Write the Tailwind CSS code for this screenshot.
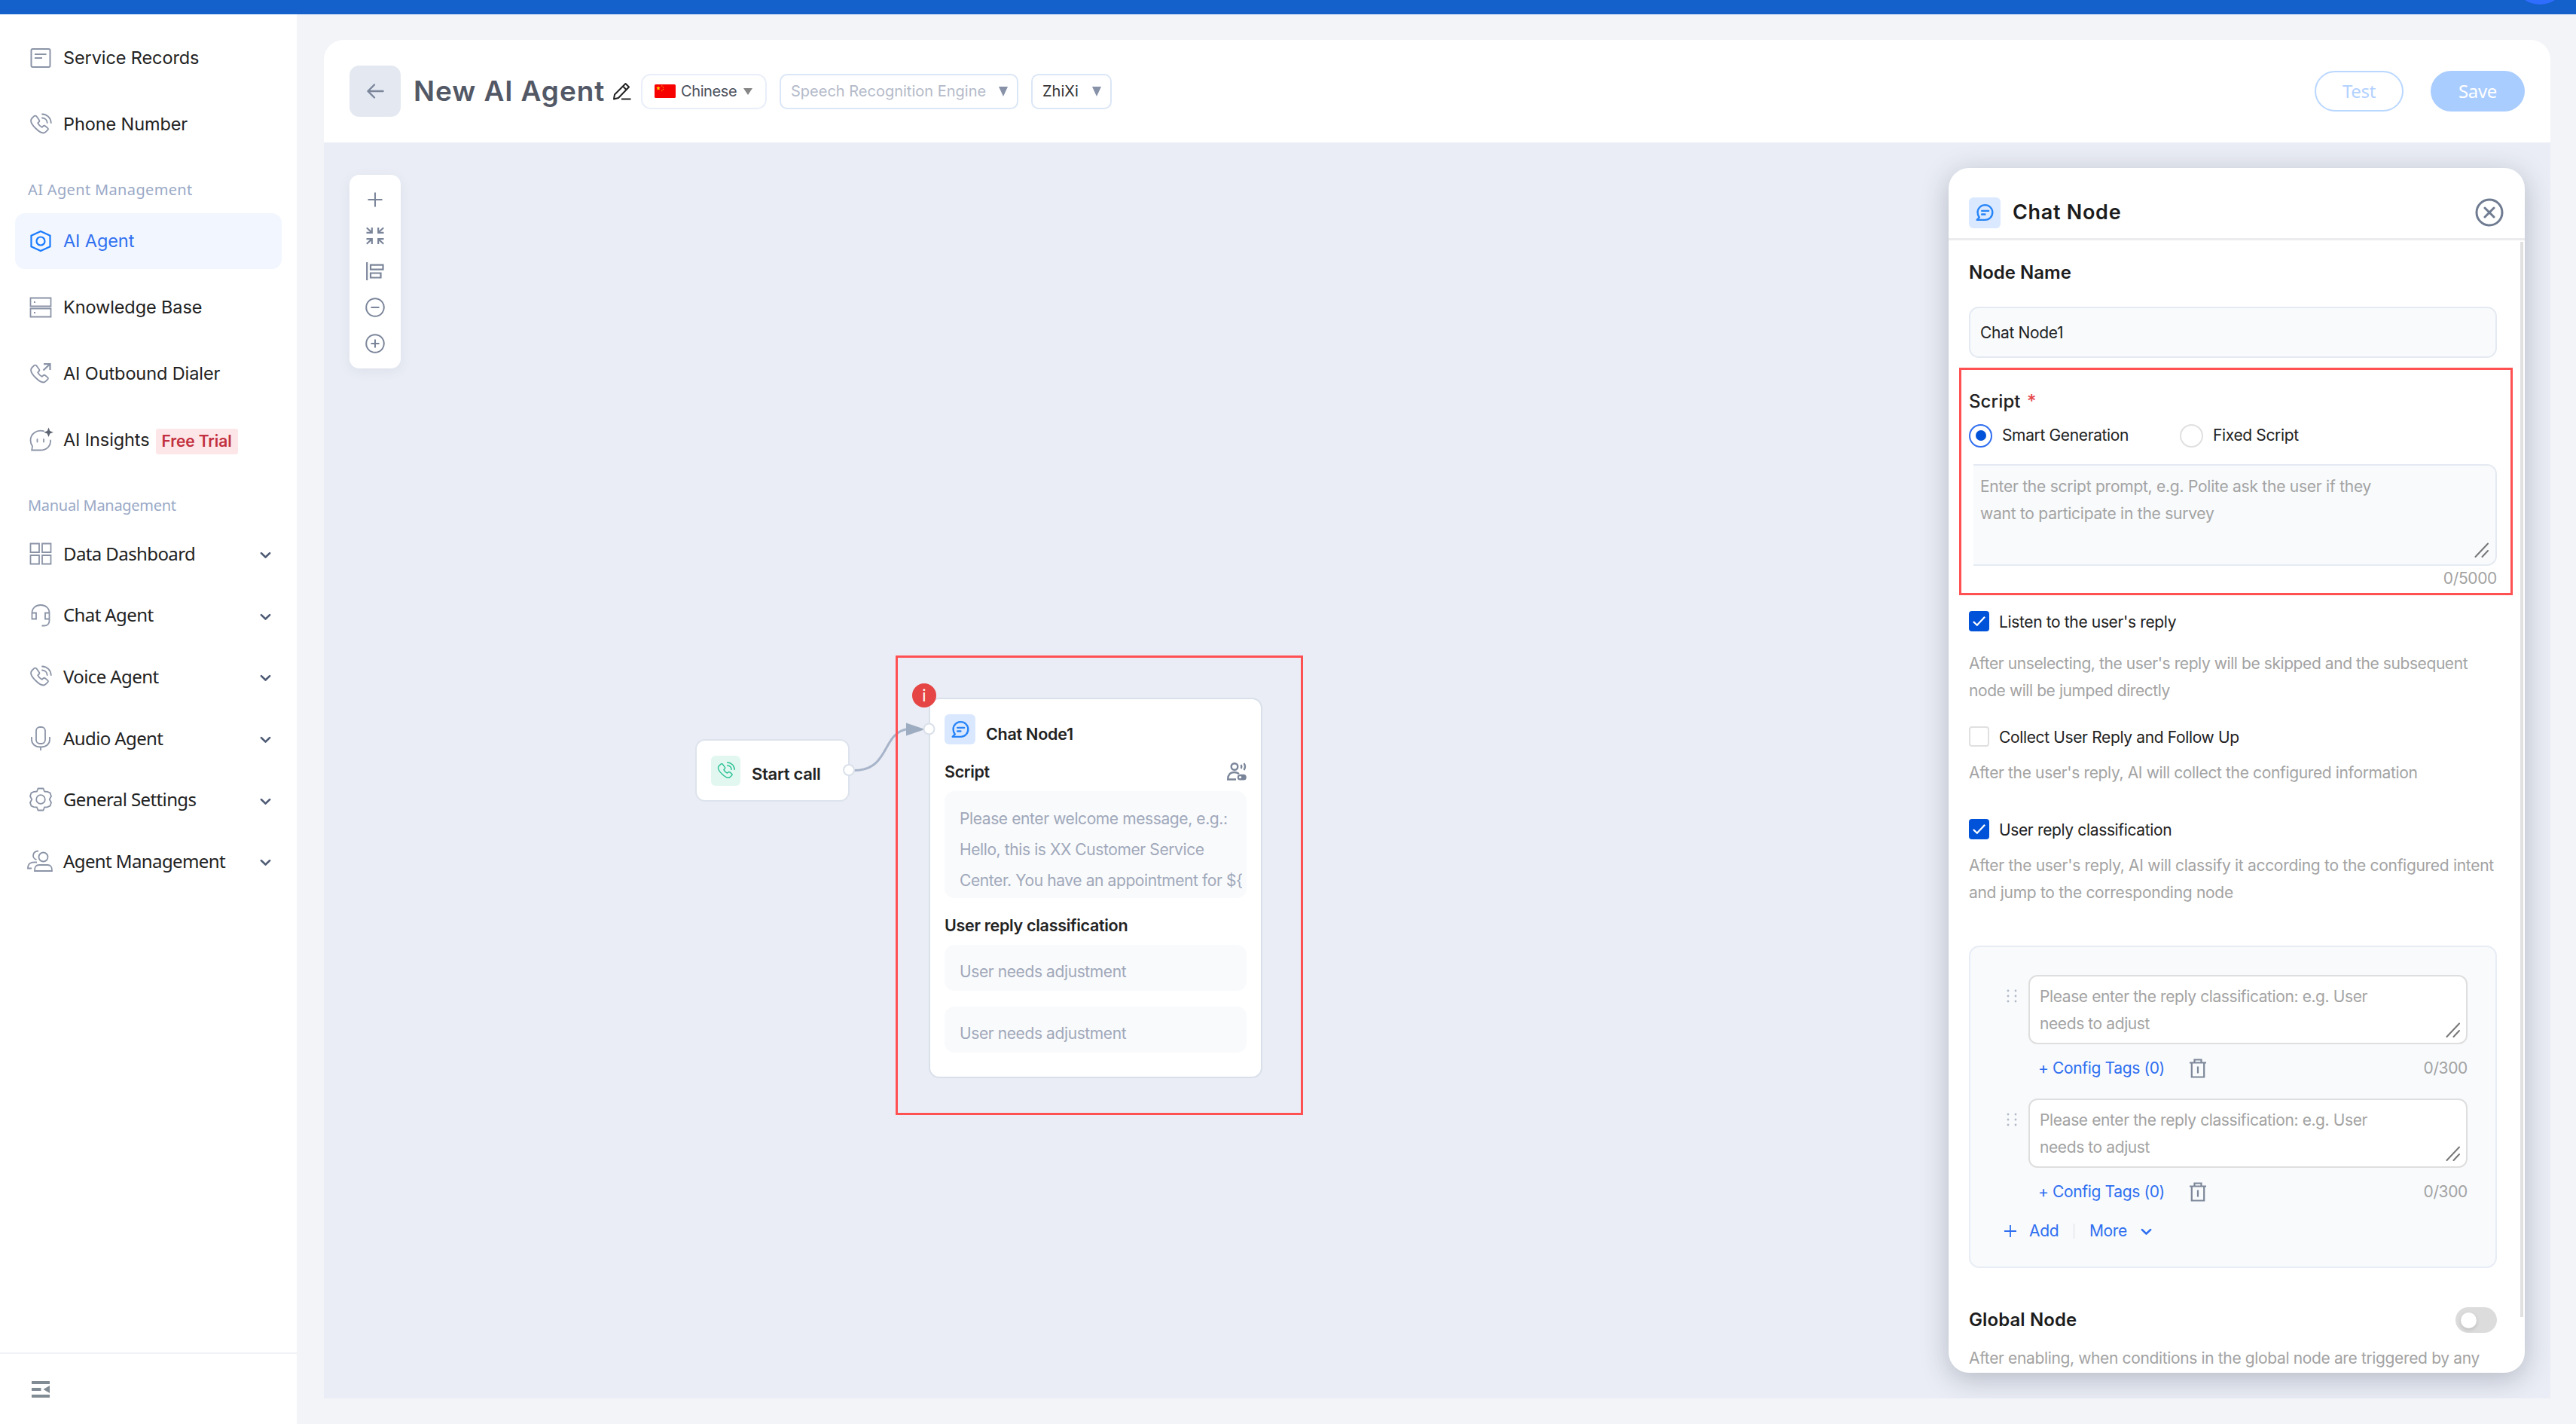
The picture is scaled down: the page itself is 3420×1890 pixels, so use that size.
<!DOCTYPE html>
<html lang="en">

<head>
    <meta charset="UTF-8">
    <meta name="viewport" content="width=device-width, initial-scale=1.0">
    <title>New AI Agent</title>
    <script src="https://cdn.jsdelivr.net/npm/@tailwindcss/browser@4"></script>
</head>

<body class="w-[3420px] h-[1890px] overflow-hidden bg-[#f3f4f8] font-[Inter,sans-serif] text-[#222] flex flex-col">
    <!-- Shared icons -->
    <svg class="hidden">
        <symbol id="phone" viewBox="0 0 32 32" fill="none" stroke="currentColor" stroke-width="1.8" stroke-linecap="round" stroke-linejoin="round">
            <path d="M7.2 5.2 4.4 8c-2.6 2.7-.8 7.6 4.6 13s10.700 8 13.600 5.200l2.600-2.500c.8-.8.8-2 0-2.800l-3.200-2.600c-.8-.6-1.800-.6-2.500 0l-1.700 1.500c-2.400-1-4.400-3-5.600-5.400l1.600-1.800c.7-.8.7-1.800 0-2.600L10.400 5.300c-.8-1-2.300-1-3.200-.1z" />
        </symbol>
        <symbol id="phone-wave" viewBox="0 0 32 32" fill="none" stroke="currentColor" stroke-width="1.8" stroke-linecap="round">
            <use href="#phone" width="32" height="32" />
            <path d="M18 2.500c6.500.2 11.500 5.200 11.800 11.500M18 7.500c3.800.2 6.500 2.900 6.700 6.500" />
        </symbol>
        <symbol id="chat" viewBox="0 0 28 28" fill="none" stroke="currentColor" stroke-width="2.8" stroke-linecap="round" stroke-linejoin="round">
            <path d="M2 25.500h12.500C21 25.500 26 20.500 26 14S21 2.500 14.500 2.500 3 7.500 3 14c0 3 1 5.500 2.600 7.600zM9.500 11.500h10.500M9.500 17h5" />
        </symbol>
        <symbol id="chevron" viewBox="0 0 16 16" fill="none" stroke="currentColor" stroke-width="2.8" stroke-linecap="round" stroke-linejoin="round">
            <path d="M2 5.500 8 11.200 14 5.500" />
        </symbol>
        <symbol id="grip" viewBox="0 0 20 20" fill="none" stroke="currentColor" stroke-width="2" stroke-linecap="round">
            <path d="M1.500 19 18 1.500M10.500 19 18 11" />
        </symbol>
        <symbol id="trash" viewBox="0 0 24 26" fill="none" stroke="currentColor" stroke-width="2.200">
            <path d="M1 5.500h22M7.500 5V1.500h9V5M3.800 5.500V24.500h16.400V5.500M12 10.500v9" />
        </symbol>
        <symbol id="dots" viewBox="0 0 14 18" fill="currentColor">
            <circle cx="2" cy="2" r="1.400" /><circle cx="12" cy="2" r="1.400" />
            <circle cx="2" cy="9" r="1.400" /><circle cx="12" cy="9" r="1.400" />
            <circle cx="2" cy="16" r="1.400" /><circle cx="12" cy="16" r="1.400" />
        </symbol>
    </svg>

    <!-- Top bar -->
    <div class="relative h-[19px] shrink-0 bg-[#1461cb] overflow-hidden">
        <div class="absolute left-[3336px] -top-[66px] size-[72px] rounded-full bg-[#2f6dff]"></div>
    </div>

    <div class="flex flex-1 min-h-0">
        <!-- Sidebar -->
        <aside class="w-[394px] shrink-0 bg-white flex flex-col pt-[21px] text-[23.5px] tracking-[-0.1px]">
            <nav class="px-5 flex flex-col gap-[14px]">
                <a class="h-[74px] px-[18px] flex items-center gap-[14px]">
                    <svg class="size-8 text-[#8b94a7]" viewBox="0 0 32 32" fill="none" stroke="currentColor" stroke-width="2"><rect x="3.500" y="4" width="25" height="24" rx="2" /><path d="M8 11h15.500M8 16h10" /></svg>
                    <span class="whitespace-nowrap">Service Records</span>
                </a>
                <a class="h-[74px] px-[18px] flex items-center gap-[14px]">
                    <svg class="size-8 text-[#8b94a7]"><use href="#phone-wave" /></svg>
                    <span class="whitespace-nowrap">Phone Number</span>
                </a>
            </nav>
            <div class="h-[81px] pt-[19px] pl-[37px] flex items-center text-[20px] tracking-[0.35px] text-[#9aa9c6] font-['Noto_Sans',sans-serif]">AI Agent Management</div>
            <nav class="px-5 flex flex-col gap-[14px]">
                <a class="h-[74px] px-[18px] flex items-center gap-[14px] rounded-[13px] bg-[#f1f6ff] text-[#3070f0]">
                    <svg class="size-8 text-[#1a7bff]" viewBox="0 0 32 32" fill="none" stroke="currentColor" stroke-width="2.200"><path d="M16 3 28.500 8.800V23.200L16 29 3.500 23.200V8.800z" /><circle cx="16" cy="16" r="5.500" /></svg>
                    <span class="whitespace-nowrap">AI Agent</span>
                </a>
                <a class="h-[74px] px-[18px] flex items-center gap-[14px]">
                    <svg class="size-8 text-[#8b94a7]" viewBox="0 0 32 32" fill="none" stroke="currentColor" stroke-width="1.800"><path d="M2.500 3.500h27v11h-27zM2.500 17.500h27v11h-27zM7 9h2M7 23h2" /></svg>
                    <span class="whitespace-nowrap">Knowledge Base</span>
                </a>
                <a class="h-[74px] px-[18px] flex items-center gap-[14px]">
                    <svg class="size-8 text-[#8b94a7]" viewBox="0 0 32 32" fill="none" stroke="currentColor" stroke-width="2.200"><use href="#phone" width="32" height="32" /><path d="M19.500 11.500 28 3.500M20 3.200h8.500V11" /></svg>
                    <span class="whitespace-nowrap">AI Outbound Dialer</span>
                </a>
                <a class="h-[74px] px-[18px] flex items-center gap-[14px]">
                    <svg class="size-8 text-[#8b94a7] overflow-visible" viewBox="0 0 32 32" fill="none" stroke="currentColor" stroke-width="1.800" stroke-linecap="round"><path d="M20 4.200C10.500 1.800 2.500 8 2.500 16.500c0 3 1 5.500 2.500 7.800l-.8 5.200h11.300c8.500 0 14-5.500 13.500-13M11.500 15v3.500M20 15v3.500" /><path d="M26.500-.5 28.300 4l4.500 1.700-4.500 1.800-1.800 4.500-1.800-4.500-4.500-1.800L24.700 4z" fill="#5d6472" stroke="none" /></svg>
                    <span class="whitespace-nowrap">AI Insights</span>
                    <span class="-ml-[6px] mt-1 h-[34px] w-[109px] flex items-center justify-center rounded-[3px] bg-[#fde6e8] text-[#c2303f] text-[21px] font-semibold whitespace-nowrap">Free Trial</span>
                </a>
            </nav>
            <div class="h-[73px] pt-[27px] pl-[37px] flex items-center text-[20px] tracking-[-0.3px] text-[#9aa9c6] font-['Noto_Sans',sans-serif]">Manual Management</div>
            <nav class="font-['Noto_Sans',sans-serif] text-[24px] tracking-[-0.6px] text-[#222] [&>a]:h-[81.6px] [&>a]:pl-[38px] [&>a]:pr-[34px] [&>a]:flex [&>a]:items-center [&>a]:gap-[14px]">
                <a>
                    <svg class="size-8 text-[#8b94a7]" viewBox="0 0 32 32" fill="none" stroke="currentColor" stroke-width="1.800"><path d="M2.500 2.500h11.500V14H2.500zM18 2.500h11.500V14H18zM2.500 18h11.500v11.500H2.500zM18 18h11.500v11.500H18z" /></svg>
                    <span class="flex-none">Data Dashboard</span><svg class="size-[15px] ml-auto mt-1 text-[#4e5b75]"><use href="#chevron" /></svg>
                </a>
                <a>
                    <svg class="size-8 text-[#8b94a7]" viewBox="0 0 32 32" fill="none" stroke="currentColor" stroke-width="1.800"><path d="M4.500 20V13.500C4.500 7 9.500 3 16 3s11.500 4 11.500 10.500V24c0 4-3 6.500-7 6.500h-3M4.500 13.500H10v8H4.500zM27.500 13.500H22v8h5.500z" /></svg>
                    <span class="flex-none">Chat Agent</span><svg class="size-[15px] ml-auto mt-1 text-[#4e5b75]"><use href="#chevron" /></svg>
                </a>
                <a>
                    <svg class="size-8 text-[#8b94a7]"><use href="#phone-wave" /></svg>
                    <span class="flex-none">Voice Agent</span><svg class="size-[15px] ml-auto mt-1 text-[#4e5b75]"><use href="#chevron" /></svg>
                </a>
                <a>
                    <svg class="size-8 text-[#8b94a7]" viewBox="0 0 32 32" fill="none" stroke="currentColor" stroke-width="1.800"><rect x="10" y="1" width="12" height="22" rx="5" /><path d="M4 14v3.500c0 6 4.500 10 12 10s12-4 12-10V14M16 27.500V32" /></svg>
                    <span class="flex-none">Audio Agent</span><svg class="size-[15px] ml-auto mt-1 text-[#4e5b75]"><use href="#chevron" /></svg>
                </a>
                <a>
                    <svg class="size-8 text-[#8b94a7]" viewBox="0 0 32 32" fill="none" stroke="currentColor" stroke-width="1.800" stroke-linejoin="round"><path d="M12.500 1.500h7l1.500 4 4 .3 3.500 1.500 1.500 4.500-2.300 4.200 2.300 4.200-1.500 4.500-3.500 1.500-4 .3-1.500 4h-7l-1.500-4-4-.3L3.500 24.700 2 20.200 4.300 16 2 11.800 3.500 7.300 7 5.800l4-.3z" /><circle cx="16" cy="16" r="5.800" /></svg>
                    <span class="flex-none">General Settings</span><svg class="size-[15px] ml-auto mt-1 text-[#4e5b75]"><use href="#chevron" /></svg>
                </a>
                <a>
                    <svg class="w-[34px] h-8 -ml-[2px] text-[#8b94a7]" viewBox="0 0 34 32" fill="none" stroke="currentColor" stroke-width="1.800"><circle cx="21.500" cy="10.500" r="6" /><path d="M10 29c0-5 1-8 6-8h11c5 0 6 3 6 8zM12.500 13.800C6 12.500 6.500 2.800 15 2.500M13 17.500c-8-.5-12 1-12 8h5" /></svg>
                    <span class="flex-none">Agent Management</span><svg class="size-[15px] ml-auto mt-1 text-[#4e5b75]"><use href="#chevron" /></svg>
                </a>
            </nav>
            <div class="mt-auto h-[95px] border-t-2 border-[#f1f2f8] pl-[42px] flex items-center">
                <svg class="w-6 h-[22px] text-[#808b93]" viewBox="0 0 24 22" fill="currentColor"><path d="M0 0h24v4H0zM0 9h12.500v4H0zM0 18h24v4H0zM24 6v10l-8.500-5z" /></svg>
            </div>
        </aside>

        <!-- Editor -->
        <main class="flex-1 pl-9 pr-[34px] pt-[34px] pb-[34px] flex flex-col">
            <header class="h-[136px] shrink-0 bg-white rounded-t-[26px] pl-[34px] pr-[34px] flex items-center">
                <button class="size-[68px] rounded-[13px] bg-[#e3e8f1] flex items-center justify-center">
                    <svg class="size-6 text-[#7b859a]" viewBox="0 0 24 24" fill="none" stroke="currentColor" stroke-width="2.400" stroke-linecap="round" stroke-linejoin="round"><path d="M22.500 12H2.500M11 3.500 2.500 12l8.500 8.500" /></svg>
                </button>
                <h1 class="ml-[17px] w-[254px] text-[37px] tracking-[0.9px] font-semibold text-[#525866] whitespace-nowrap">New AI Agent</h1>
                <svg class="ml-[11px] size-6 text-[#222]" viewBox="0 0 24 24" fill="none" stroke="currentColor" stroke-width="2" stroke-linejoin="round"><path d="M1 22.500 2 16.500 16.500 2l4.500 4.500L7 21zM13 5.500l4.500 4.500M11 22.500h12.500" /></svg>
                <div class="ml-[13px] w-[167px] h-[47px] rounded-[13px] border-2 border-[#e9eef9] flex items-center pl-4 text-[20px] tracking-[-0.4px] text-[#4b505c]">
                    <svg class="w-7 h-[18px]" viewBox="0 0 28 18"><rect width="28" height="18" rx="1.500" fill="#f60000" /><path d="m5 2.200.8 1.900 2 .1-1.600 1.300.6 2L5 6.400 3.200 7.500l.6-2L2.200 4.200l2-.1z" fill="#ffd400" /><g fill="#ff9500"><circle cx="9.800" cy="2" r=".8" /><circle cx="11.500" cy="4" r=".8" /><circle cx="11.500" cy="6.500" r=".8" /><circle cx="9.800" cy="8.500" r=".8" /></g></svg>
                    <span class="ml-[7px]">Chinese</span>
                    <svg class="ml-auto mr-[17px] w-3 h-[9px]" viewBox="0 0 12 9"><path d="M0 0h12L6 9z" fill="#868686" /></svg>
                </div>
                <div class="ml-[17px] w-[317px] h-[47px] rounded-[10px] border-2 border-[#dbe6f6] flex items-center pl-[13px] text-[20px] text-[#b4bac9]">
                    <span class="whitespace-nowrap">Speech Recognition Engine</span>
                    <svg class="ml-auto mr-3 w-3 h-[13px]" viewBox="0 0 12 13"><path d="M0 0h12L6 13z" fill="#8791a8" /></svg>
                </div>
                <div class="ml-[17px] w-[107px] h-[47px] rounded-[10px] border-2 border-[#dbe6f6] flex items-center pl-[13px] text-[20px] text-[#333]">
                    <span>ZhiXi</span>
                    <svg class="ml-auto mr-3 w-3 h-[13px]" viewBox="0 0 12 13"><path d="M0 0h12L6 13z" fill="#8791a8" /></svg>
                </div>
                <button class="ml-auto w-[118px] h-[54px] rounded-full border-2 border-[#b9d7ff] text-[#b3d2ff] text-[24px] tracking-[-0.3px] font-['Noto_Sans',sans-serif]">Test</button>
                <button class="ml-9 w-[125px] h-[54px] rounded-full bg-[#aacdff] text-white text-[24px] tracking-[-0.3px] font-['Noto_Sans',sans-serif]">Save</button>
            </header>

            <!-- Canvas -->
            <section class="relative flex-1 bg-[#eaedf5] overflow-hidden">
                <div class="absolute left-[34px] top-[43px] w-[68px] h-[257px] rounded-[13px] bg-white shadow-[0_4px_16px_rgba(60,90,130,0.08)] flex flex-col items-center pt-[21px] gap-[23.7px] text-[#7b859a]">
                    <svg class="size-6" viewBox="0 0 24 24" fill="none" stroke="currentColor" stroke-width="2"><path d="M12 2.500v19M2.500 12h19" /></svg>
                    <svg class="size-6" viewBox="0 0 24 24" fill="none" stroke="currentColor" stroke-width="2.200"><path d="M.8 1.200 8 8M.5 7.800h7.300V1M23.200 1.200 16 8M23.500 7.800h-7.300V1M.8 22.800 8 16M.5 16.200h7.300V23M23.200 22.800 16 16M23.500 16.200h-7.300V23" /></svg>
                    <svg class="size-6" viewBox="0 0 24 24" fill="none" stroke="currentColor" stroke-width="2.200"><path d="M1.200 0v24M6 3.700h16.500v6H6zM6 14.500h13.500v6H6z" /></svg>
                    <svg class="size-[26px] -my-px" viewBox="0 0 26 26" fill="none" stroke="currentColor" stroke-width="2"><circle cx="13" cy="13" r="11.800" /><path d="M7.500 13h11" /></svg>
                    <svg class="size-[26px] -my-px" viewBox="0 0 26 26" fill="none" stroke="currentColor" stroke-width="2"><circle cx="13" cy="13" r="11.800" /><path d="M7.500 13h11M13 7.500v11" /></svg>
                </div>

                <!-- Start node -->
                <div class="absolute left-[493px] top-[792px] w-[205px] h-[83px] rounded-[13px] border-2 border-[#dde3ec] bg-white flex items-center pl-[19px]">
                    <div class="w-[39px] h-10 rounded-[6px] bg-[#e2f7f0] text-[#2cc294] flex items-center justify-center"><svg class="size-[26px]" stroke-width="2.600"><use href="#phone-wave" /></svg></div>
                    <span class="ml-[15px] mt-[10px] text-[22px] tracking-[-0.3px] font-semibold text-[#222] whitespace-nowrap">Start call</span>
                </div>

                <!-- Chat node -->
                <div class="absolute left-[803px] top-[737px] w-[443px] h-[505px] rounded-[14px] border-2 border-[#d9e0ea] bg-white px-[19px] pt-[20px] text-[21.500px]">
                    <div class="flex h-10">
                        <div class="w-[41px] h-10 rounded-[6px] bg-[#dae8ff] text-[#2684f8] flex items-center justify-center"><svg class="w-7 h-6"><use href="#chat" /></svg></div>
                        <span class="ml-[14px] mt-[6px] font-semibold leading-10 tracking-[-0.25px] whitespace-nowrap text-[21.5px]">Chat Node1</span>
                    </div>
                    <div class="mt-4 h-10 flex items-center justify-between">
                        <span class="font-semibold text-[21.5px] tracking-[-0.35px]">Script</span>
                        <svg class="w-[26px] h-6 text-[#7a8599]" viewBox="0 0 26 24" fill="none" stroke="currentColor" stroke-width="2.400"><circle cx="10" cy="5.500" r="4.300" /><path d="M12 22.500H1.200c0-6 3-9.500 8.300-9.500 3 0 5 .8 6.300 2.200M18.500 3.200c1 1.600 1 3.200 0 4.800M22.500 1.200c2 3 2 5.800 0 8.800" /><rect x="14.500" y="16.500" width="10.500" height="6.300" rx="3.100" fill="currentColor" stroke-width="1.500" /><circle cx="17.500" cy="19.600" r="1.600" fill="#fff" stroke="none" /></svg>
                    </div>
                    <div class="mt-[6px] h-[142px] rounded-[13px] bg-[#f9fafc] pl-[20px] pt-4 leading-[41px] text-[21px] tracking-[-0.4px] text-[#9fa8ba] whitespace-nowrap">
                        <div>Please enter welcome message, e.g.:</div>
                        <div>Hello, this is XX Customer Service</div>
                        <div>Center. You have an appointment for ${</div>
                    </div>
                    <div class="mt-4 h-10 leading-10 font-semibold text-[21.5px] tracking-[-0.3px]">User reply classification</div>
                    <div class="mt-[6px] h-[61px] rounded-[13px] bg-[#f9fafc] pl-[20px] leading-[72px] text-[21px] tracking-[-0.4px] text-[#9fa8ba]">User needs adjustment</div>
                    <div class="mt-[21px] h-[61px] rounded-[13px] bg-[#f9fafc] pl-[20px] leading-[72px] text-[21px] tracking-[-0.4px] text-[#9fa8ba]">User needs adjustment</div>
                </div>

                <!-- Edge with its two handles -->
                <svg class="absolute left-[680px] top-[760px] w-[140px] h-[90px]" viewBox="0 0 140 90">
                    <path d="M24 73.500C72 73.500 60 24 95 18.500" fill="none" stroke="#a7b4c9" stroke-width="3" />
                    <path d="M93 10.500v17L118 19z" fill="#9dacc0" />
                    <circle cx="17" cy="73" r="7" fill="#fff" stroke="#d9e0ea" stroke-width="2" />
                    <circle cx="123.500" cy="18.500" r="7" fill="#fff" stroke="#d9e0ea" stroke-width="2" />
                </svg>
                <div class="absolute left-[781px] top-[718px] size-8 rounded-full bg-[#e54545] text-white text-[22px] leading-8 text-center">i</div>
                <div class="absolute left-[759px] top-[681px] w-[541px] h-[610px] border-[3px] border-[#ff5052]"></div>

                <!-- Node settings panel -->
                <div class="absolute left-[2157px] top-[34px] w-[765px] h-[1599px] rounded-[27px] bg-white shadow-[0_8px_36px_rgba(40,50,70,0.28)]">
                    <div class="h-full rounded-[27px] overflow-hidden">
                        <div class="h-[96px] pt-[25px] pl-[27px] pr-[28px] border-b-[3px] border-[#ececee] flex items-center">
                            <div class="w-[42px] h-[41px] rounded-[6px] bg-[#dae9ff] text-[#2684f8] flex items-center justify-center"><svg class="w-7 h-6"><use href="#chat" /></svg></div>
                            <span class="ml-[16px] text-[27px] tracking-[0.7px] font-semibold text-[#1c1c1c] whitespace-nowrap">Chat Node</span>
                            <svg class="ml-auto size-[38px] text-[#6f7b91]" viewBox="0 0 38 38" fill="none" stroke="currentColor" stroke-width="3" stroke-linecap="round"><circle cx="19" cy="19" r="17" /><path d="m13 13 12 12M25 13 13 25" /></svg>
                        </div>
                        <div class="pl-[27px] pr-[37px] text-[21px] tracking-[-0.36px] whitespace-nowrap">
                            <div class="mt-[25px] h-9 leading-9 text-[24px] tracking-normal font-semibold text-[#1c1c1c]">Node Name</div>
                            <div class="mt-[27px] h-[68px] rounded-[13px] border-2 border-[#e5eaf2] bg-[#f8fafc] pl-[13px] pt-[2px] flex items-center">Chat Node1</div>
                            <div class="mt-10 h-9 leading-9 text-[24px] tracking-[0.1px] font-medium">Script <span class="ml-[2px] text-[#e5484d]">*</span></div>
                            <div class="mt-[11px] h-8 flex items-center">
                                <span class="size-[31px] rounded-full border-2 border-[#2f6ef0] flex items-center justify-center"><span class="size-[14px] rounded-full bg-[#0052d9]"></span></span>
                                <span class="ml-[13px] w-[236px]">Smart Generation</span>
                                <span class="size-[31px] rounded-full border-2 border-[#e0e0e0]"></span>
                                <span class="ml-[13px]">Fixed Script</span>
                            </div>
                            <div class="relative ml-[6px] mt-[22px] h-[135px] rounded-r-[13px] border-y-2 border-r-2 border-[#e5eaf2] bg-[#f8fafc] pl-[9px] pt-[10px] leading-9 tracking-[-0.25px] text-[#a3a3a3]">
                                Enter the script prompt, e.g. Polite ask the user if they<br>want to participate in the survey
                                <svg class="absolute right-2 bottom-[9px] size-5 text-[#777]"><use href="#grip" /></svg>
                            </div>
                            <div class="h-[34px] leading-[34px] text-right text-[#a3a3a3]">0/5000</div>
                            <div class="mt-[25px] h-7 flex items-center">
                                <span class="size-[27px] rounded-[4px] bg-[#0052d9] flex items-center justify-center"><svg class="size-[19px]" viewBox="0 0 20 20" fill="none" stroke="#fff" stroke-width="2.400"><path d="m2 10.500 5.200 5L18 4" /></svg></span>
                                <span class="ml-[13px] mt-[3px]">Listen to the user's reply</span>
                            </div>
                            <div class="mt-[25px] leading-9 tracking-[-0.42px] text-[#a3a3a3]">After unselecting, the user's reply will be skipped and the subsequent<br>node will be jumped directly</div>
                            <div class="mt-7 h-7 flex items-center">
                                <span class="size-[27px] rounded-[4px] border-2 border-[#e0e0e0]"></span>
                                <span class="ml-[13px] mt-[3px]">Collect User Reply and Follow Up</span>
                            </div>
                            <div class="mt-[17px] leading-9 text-[#a3a3a3]">After the user's reply, AI will collect the configured information</div>
                            <div class="mt-[42px] h-7 flex items-center">
                                <span class="size-[27px] rounded-[4px] bg-[#0052d9] flex items-center justify-center"><svg class="size-[19px]" viewBox="0 0 20 20" fill="none" stroke="#fff" stroke-width="2.400"><path d="m2 10.500 5.200 5L18 4" /></svg></span>
                                <span class="ml-[13px] mt-[3px]">User reply classification</span>
                            </div>
                            <div class="mt-[17px] leading-9 tracking-[-0.3px] text-[#a3a3a3]">After the user's reply, AI will classify it according to the configured intent<br>and jump to the corresponding node</div>

                            <!-- Reply classification list -->
                            <div class="mt-[52px] h-[428px] rounded-[14px] border-2 border-[#e8ecf5] bg-[#f8fafc] pl-[48px] pr-[37px] pt-[37px]">
                                <div class="flex">
                                    <svg class="mt-[19px] w-[14px] h-[18px] mr-[15px] text-[#b3b9c6]"><use href="#dots" /></svg>
                                    <div class="flex-1">
                                        <div class="relative h-[92px] rounded-[12px] border-2 border-[#dedede] bg-white pl-[13px] pt-[9px] leading-[36px] tracking-[-0.4px] text-[#a3a3a3]">
                                            Please enter the reply classification: e.g. User<br>needs to adjust
                                            <svg class="absolute right-[7px] bottom-[7px] size-5 text-[#777]"><use href="#grip" /></svg>
                                        </div>
                                        <div class="h-[63px] pl-[13px] flex items-center text-[#2f6ff0]">
                                            <span>+ Config Tags (0)</span>
                                            <svg class="ml-[32px] w-6 h-[26px] text-[#7d8799]"><use href="#trash" /></svg>
                                            <span class="ml-auto text-[#a3a3a3]">0/300</span>
                                        </div>
                                    </div>
                                </div>
                                <div class="mt-[9px] flex">
                                    <svg class="mt-[19px] w-[14px] h-[18px] mr-[15px] text-[#b3b9c6]"><use href="#dots" /></svg>
                                    <div class="flex-1">
                                        <div class="relative h-[92px] rounded-[12px] border-2 border-[#dedede] bg-white pl-[13px] pt-[9px] leading-[36px] tracking-[-0.4px] text-[#a3a3a3]">
                                            Please enter the reply classification: e.g. User<br>needs to adjust
                                            <svg class="absolute right-[7px] bottom-[7px] size-5 text-[#777]"><use href="#grip" /></svg>
                                        </div>
                                        <div class="h-[63px] pl-[13px] flex items-center text-[#2f6ff0]">
                                            <span>+ Config Tags (0)</span>
                                            <svg class="ml-[32px] w-6 h-[26px] text-[#7d8799]"><use href="#trash" /></svg>
                                            <span class="ml-auto text-[#a3a3a3]">0/300</span>
                                        </div>
                                    </div>
                                </div>
                                <div class="h-[42px] flex items-center -ml-[3px] text-[#2f6ff0]">
                                    <svg class="size-4" viewBox="0 0 16 16" fill="none" stroke="currentColor" stroke-width="1.800"><path d="M8 0v16M0 8h16" /></svg>
                                    <span class="ml-[17px] w-[59px]">Add</span>
                                    <span class="w-px h-5 bg-[#dcdfe6]"></span>
                                    <span class="ml-5">More</span>
                                    <svg class="ml-[18px] mt-px size-[15px]"><use href="#chevron" /></svg>
                                </div>
                            </div>

                            <div class="mt-[51px] h-9 flex items-center justify-between">
                                <span class="text-[24px] tracking-[0.1px] font-semibold text-[#1c1c1c]">Global Node</span>
                                <span class="w-[55px] h-[34px] rounded-full bg-[#dcdcdc] flex items-center pl-[7px]"><span class="size-[21px] rounded-full bg-white shadow-[0_2px_5px_rgba(0,0,0,0.15)]"></span></span>
                            </div>
                            <div class="mt-[15px] leading-9 text-[#a3a3a3]">After enabling, when conditions in the global node are triggered by any</div>
                        </div>
                    </div>
                    <div class="absolute right-[2px] top-[98px] w-1 h-[1427px] bg-[#e0e0e0]"></div>
                    <div class="absolute left-[14px] top-[265px] w-[735px] h-[302px] border-[3px] border-[#ff5052]"></div>
                </div>
            </section>
        </main>
    </div>
</body>

</html>
